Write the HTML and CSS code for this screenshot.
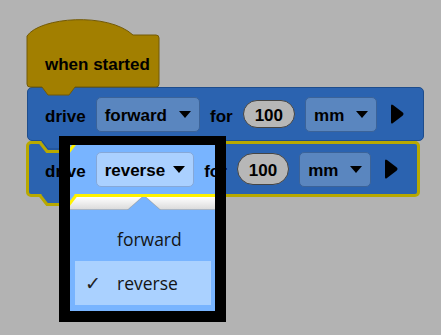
FILE: index.html
```html
<!DOCTYPE html>
<html lang="en">
<head>
  <meta charset="UTF-8">
  <title>Drive block</title>
  <link rel="stylesheet" href="styles.css">
</head>
<body>

  <!-- Blocos do programa -->
  <div class="workspace">
    <svg class="hat" width="135" height="78" viewBox="26 19 135 78">
      <path class="hat-shape" d="M27 36 C40 17, 108 12, 133 35 L156 35 Q159 35 159 38 L159 84 Q159 87 156 87 L75 87 L69 95 L48 95 L42 87 L30 87 Q27 87 27 84 Z"/>
      <text class="hat-label" x="45" y="70">when started</text>
    </svg>

    <div class="block block-first">
      <span class="label">drive</span>
      <span class="field">forward<i class="caret"></i></span>
      <span class="label">for</span>
      <span class="pill">100</span>
      <span class="field">mm<i class="caret"></i></span>
      <svg class="play" width="14" height="20" viewBox="0 0 14 20"><path d="M3 1 L12.5 8.3 Q14.5 10 12.5 11.7 L3 19 Q1 20.5 1 18 L1 2 Q1 -0.5 3 1 Z"/></svg>
      <svg class="tab tab-down" width="36" height="12" viewBox="0 0 36 12">
        <path class="tab-fill" d="M2 0 L2 2 L8 10 L28 10 L34 2 L34 0 Z"/>
        <path class="tab-line" d="M2 2 L8 10 L28 10 L34 2"/>
      </svg>
    </div>

    <div class="block block-selected">
      <svg class="tab tab-notch" width="39" height="14" viewBox="0 0 39 14"><path class="tab-hl" d="M1 0 L1 1.5 L8 10.5 L30 10.5 L37 1.5 L37 0"/></svg>
      <span class="label">drive</span>
      <span class="field field-short">reverse<i class="caret"></i></span>
      <span class="label">for</span>
      <span class="pill">100</span>
      <span class="field">mm<i class="caret"></i></span>
      <svg class="play" width="14" height="20" viewBox="0 0 14 20"><path d="M3 1 L12.5 8.3 Q14.5 10 12.5 11.7 L3 19 Q1 20.5 1 18 L1 2 Q1 -0.5 3 1 Z"/></svg>
      <svg class="tab tab-bottom" width="39" height="14" viewBox="0 0 39 14"><path class="tab-hl" d="M1 0 L1 1.5 L8 10.5 L30 10.5 L37 1.5 L37 0"/></svg>
    </div>
  </div>

  <!-- Destaque do menu -->
  <div class="spotlight">
    <div class="spotlight-view">
      <div class="block block-selected lit">
        <svg class="tab tab-notch" width="39" height="14" viewBox="0 0 39 14"><path class="tab-hl" d="M1 0 L1 1.5 L8 10.5 L30 10.5 L37 1.5 L37 0"/></svg>
        <span class="label">drive</span>
        <span class="field field-short">reverse<i class="caret"></i></span>
        <span class="label">for</span>
        <svg class="tab tab-bottom" width="39" height="14" viewBox="0 0 39 14"><path class="tab-hl" d="M1 0 L1 1.5 L8 10.5 L30 10.5 L37 1.5 L37 0"/></svg>
      </div>
      <div class="menu-edge"></div>
      <div class="menu">
        <div class="menu-item">forward</div>
        <div class="menu-item is-checked"><span class="check">✓</span>reverse</div>
      </div>
    </div>
  </div>

</body>
</html>
```

FILE: styles.css
```css
body {
  margin: 0;
  height: 335px;
  overflow: hidden;
  background-color: #b3b3b3;
  font-family: "Liberation Sans", Arial, sans-serif;
  font-weight: bold;
  font-size: 17px;
  color: #000;
}

.workspace {
  padding: 19px 0 0 26px;
}

.hat {
  display: block;
  position: relative;
  z-index: 3;
  margin-bottom: -10px;
}

.hat-shape {
  fill: #a27f00;
  stroke: #735a06;
  stroke-width: 1;
}

.hat-label {
  font-family: "Liberation Sans", Arial, sans-serif;
  font-weight: bold;
  font-size: 17px;
  fill: #000;
}

/* blocos */
.block {
  --bg: #2b63b0;
  --edge: #1e4d8c;
  --field: #5a86bf;
  --field-edge: #3b6399;
  --hl: #b8a900;
  position: relative;
  display: flex;
  align-items: center;
  gap: 10px;
  width: max-content;
  box-sizing: border-box;
  height: 54px;
  padding: 0 19px 0 17px;
  background-color: var(--bg);
  border: 1px solid var(--edge);
  border-radius: 5px;
}

.block-first {
  margin-left: 1px;
  z-index: 2;
}

.block-selected {
  height: 56px;
  padding-left: 16px;
  border: 3px solid var(--hl);
  z-index: 1;
}

.lit {
  --bg: #78b4ff;
  --field: #aad0ff;
  --field-edge: #86a8d8;
  --hl: #fff200;
  margin: -4px 0 0 -44px;
}

.label {
  padding-top: 5px;
}

.field {
  display: flex;
  align-items: center;
  gap: 12px;
  height: 35px;
  box-sizing: border-box;
  padding: 4px 8px 0;
  background-color: var(--field);
  border: 1px solid var(--field-edge);
  border-radius: 5px;
}

.field-short {
  gap: 8px;
}

.caret {
  width: 0;
  height: 0;
  margin-top: -4px;
  border-left: 6px solid transparent;
  border-right: 6px solid transparent;
  border-top: 7px solid #000;
}

.pill {
  display: flex;
  align-items: center;
  height: 28px;
  box-sizing: border-box;
  padding: 3px 11px 0;
  background-color: #b7b7b7;
  border: 1px solid #454545;
  border-radius: 14px;
}

.block-selected .pill {
  height: 32px;
  border-radius: 16px;
}

.play {
  margin-left: 3px;
}

.tab {
  position: absolute;
  left: 10px;
}

.tab-down {
  left: 12px;
  top: 51px;
}

.tab-notch {
  top: -3px;
}

.tab-bottom {
  top: 50px;
}

.tab-fill {
  fill: var(--bg);
}

.tab-line {
  fill: none;
  stroke: var(--edge);
}

.tab-hl {
  fill: var(--bg);
  stroke: var(--hl);
  stroke-width: 3;
}

/* destaque */
.spotlight {
  position: absolute;
  z-index: 10;
  left: 59px;
  top: 136px;
  border: solid #000;
  border-width: 9px 11px 11px 11px;
}

.spotlight-view {
  width: 145px;
  height: 166px;
  overflow: hidden;
}

.menu-edge {
  height: 12px;
  background: linear-gradient(#ffffff, #dcdcdc);
  border-bottom: 1px solid #a9b6c6;
}

.menu {
  position: relative;
  height: 101px;
  box-sizing: border-box;
  padding: 7px 4px 6px 5px;
  background-color: #78b4ff;
  font-family: "Open Sans", sans-serif;
  font-weight: normal;
  font-size: 17.5px;
  color: #141414;
}

.menu::before,
.menu::after {
  content: "";
  position: absolute;
  clip-path: polygon(50% 0, 100% 100%, 0 100%);
}

.menu::before {
  left: 57px;
  top: -15px;
  width: 34px;
  height: 15px;
  background-color: #9aa6b4;
}

.menu::after {
  left: 58px;
  top: -14px;
  width: 32px;
  height: 14px;
  background-color: #78b4ff;
}

.menu-item {
  display: flex;
  align-items: center;
  height: 44px;
  padding-left: 42px;
}

.menu-item.is-checked {
  padding-left: 10px;
  background-color: #aad1ff;
}

.check {
  width: 32px;
  font-family: "DejaVu Sans", sans-serif;
  font-weight: bold;
  font-size: 19px;
  color: #222;
}
```
